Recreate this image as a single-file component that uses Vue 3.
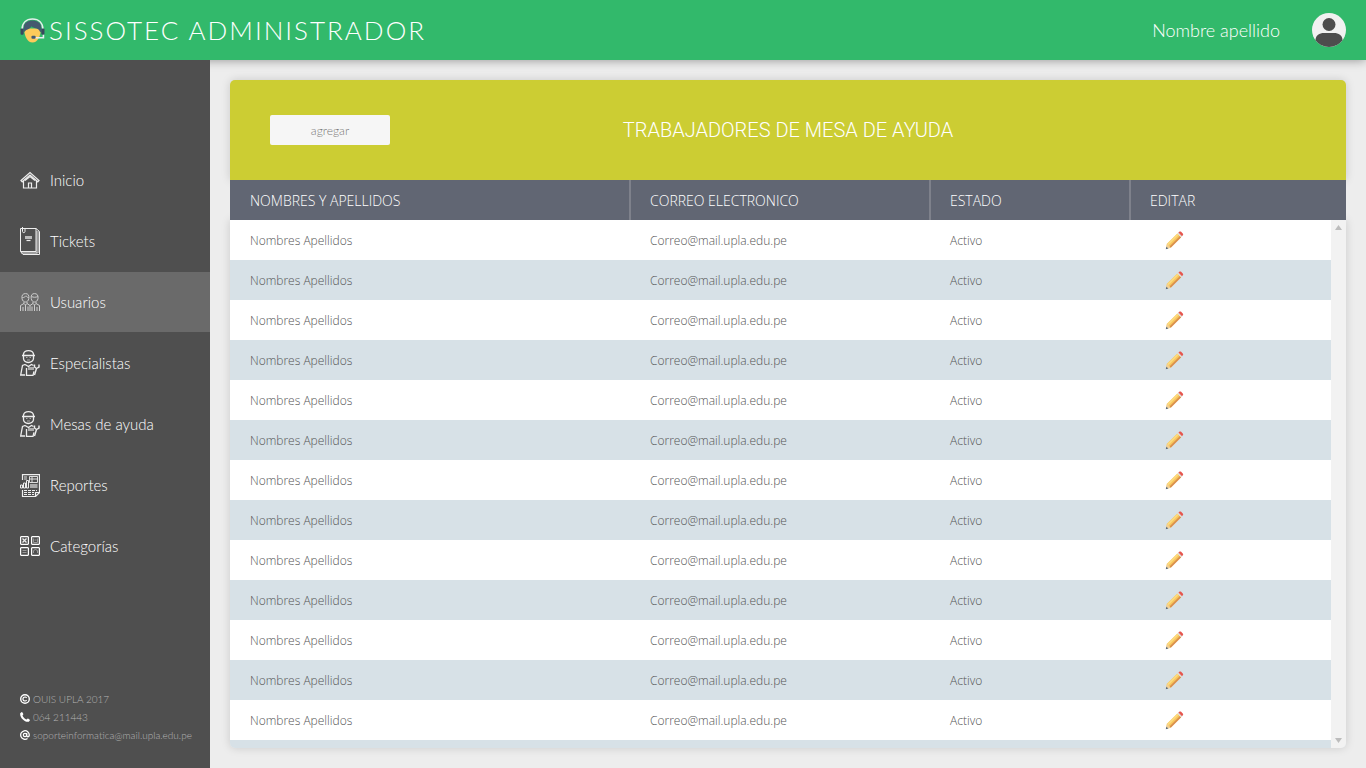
<script setup>
const menu = [
  { id: 'inicio', label: 'Inicio' },
  { id: 'tickets', label: 'Tickets' },
  { id: 'usuarios', label: 'Usuarios', active: true },
  { id: 'especialistas', label: 'Especialistas' },
  { id: 'mesas', label: 'Mesas de ayuda' },
  { id: 'reportes', label: 'Reportes' },
  { id: 'categorias', label: 'Categorías' }
]

const workers = Array.from({ length: 14 }, (_, i) => ({
  id: i + 1,
  name: 'Nombres Apellidos',
  email: 'Correo@mail.upla.edu.pe',
  status: 'Activo'
}))
</script>

<template>
  <div class="app">
    <header class="topbar">
      <h1 class="brand">
        <svg class="brand-icon" viewBox="0 0 24 24" aria-hidden="true">
          <path d="M4 10h16c0 7-3 13.500-8 13.500S4 17 4 10z" fill="#fdcb5b" />
          <path d="M3.500 14V9C4 4.500 7.500 2.500 12 2.500S20 4.500 20.500 9v5l-1.500-1c-.5-2-2-3-5-3.500-1.500-.3-2.500-.8-3-1.500-1 2.500-3.500 3-5 3.500z" fill="#445a6f" />
          <path d="M2 11C2 4.500 6 1 12 1s10 3.500 10 10" fill="none" stroke="#e4efec" stroke-width="1.500" />
          <rect x="0.500" y="10" width="3" height="6" rx="1" fill="#39485e" />
          <rect x="20.500" y="10" width="3" height="6" rx="1" fill="#39485e" />
          <path d="M22.500 16v3H14" fill="none" stroke="#e8edf0" stroke-width="1.500" />
          <rect x="11" y="17" width="4" height="3" rx="1" fill="#445a6f" />
        </svg>
        <span>SISSOTEC ADMINISTRADOR</span>
      </h1>
      <div class="user">
        <span>Nombre apellido</span>
        <svg class="avatar" viewBox="0 0 34 34" aria-hidden="true">
          <circle cx="17" cy="17" r="17" fill="#f1f1f1" />
          <circle cx="17" cy="11.500" r="6.500" fill="#4d4d4d" />
          <path d="M3.500 27.300C3.500 22 7.500 20 12 20h10c4.500 0 8.500 2 8.500 7.300A17 17 0 0 1 17 34 17 17 0 0 1 3.500 27.300z" fill="#4d4d4d" />
        </svg>
      </div>
    </header>

    <div class="body">
      <aside class="sidebar">
        <nav class="menu">
          <a v-for="item in menu" :key="item.id" href="#" class="menu-item" :class="{ active: item.active }">
            <svg v-if="item.id === 'inicio'" class="icon" viewBox="0 0 20 18" aria-hidden="true">
              <path d="M1 9.500 10 1.500l9 8-1.200 1.300L10 4l-7.800 6.800z" stroke-width="1.200" />
              <path d="M3.500 10v7h13v-7M8.500 17v-5h3v5M5 9.500l5-4 5 4" stroke-width="1.200" />
            </svg>
            <svg v-else-if="item.id === 'tickets'" class="icon" viewBox="0 0 20 28" aria-hidden="true">
              <path d="M17.500 4v22" stroke="#999" stroke-width="3" />
              <path d="M.5 1.500h15.500v23H.5zM.5 24.500l2.500 3h16.500V4.500L16 1.500M1.500 26h16" />
              <path d="M2.500 0v4.500c0 1.500 2.500 1.500 2.500 0V1.500" />
              <path d="M5 10.500h7" stroke="#bbb" stroke-width="3" />
              <path d="M6.500 13.500h4" stroke-width="1.200" />
            </svg>
            <svg v-else-if="item.id === 'usuarios'" class="icon soft" viewBox="0 0 20 18" aria-hidden="true">
              <path d="M2 5.500C1.500 2 3 .6 5.500.6S9.300 2 8.800 5.500C8.500 7.800 7 9 5.500 9S2.300 7.800 2 5.500zM11.200 5.500C10.700 2 12.200.6 14.500.6s4 1.400 3.500 4.900C17.700 7.800 16 9 14.500 9s-3-1.200-3.300-3.500z" />
              <path d="M2.200 4.800C4 4.500 5 4 6 2.800c.8 1.200 1.700 1.700 2.800 2M11.400 3.500c2 1 4.500 1 6.400 0" />
              <path d="M4 9v1.500L5.500 12 7 10.500V9M13 9v1.500l1.500 1.500 1.500-1.500V9M.5 18v-5.500L4 10.500M7 10.500l3 2 3-2M16 10.500l3.500 2V18M3 18v-4M5.500 18v-6M8 18v-4.500M10 18v-5.500M12 18v-4.500M14.500 18v-6M17 18v-4" />
            </svg>
            <svg v-else-if="item.id === 'especialistas' || item.id === 'mesas'" class="icon" viewBox="0 0 20 26" aria-hidden="true">
              <path d="M3.500 5.500V4C4 1.500 6 .7 8.500.7S13 1.500 13.500 4v1.500M2 5.500h13" stroke-width="1.300" />
              <path d="M3.500 6v2.500c0 2 2 4 4.800 4s5.200-2 5.200-4V6" stroke-width="1.300" />
              <path d="M6 7.500h1.500M9.500 7.500H11M7 10h3" stroke="#aaa" />
              <path d="M5 14.500l-2.500 1L.7 25H5M5 14.500l3.500 2 3-2 2 1M6.500 18v7.300H13l1-4" stroke-width="1.300" />
              <path d="M8 18.500h6" stroke="#aaa" stroke-width="3" />
              <path d="M14.500 14.500v2.500l2 1.500 2.500-1.500v-2.500M16.500 18.500 14.500 25" stroke-width="1.400" />
            </svg>
            <svg v-else-if="item.id === 'reportes'" class="icon" viewBox="0 0 20 23" aria-hidden="true">
              <path d="M2.500 6V.6h17v18l-4 3.900h-13V16M15.500 22.500v-4h4" stroke-width="1.200" />
              <path d="M.5 14v-3h2v3zM3.500 14V9h2v5zM6.500 14V6.500h2V14z" />
              <path d="M4 3h3M4 5h3M9.500 2.500h8v6h-8zM9.500 5h8M12 2.500v6" stroke-width=".9" />
              <path d="M10 12h7.500" stroke="#aaa" stroke-width="4" />
              <path d="M4 16.500h13M4 18.500h10M4 20.500h10" stroke-dasharray="3 1" />
            </svg>
            <svg v-else class="icon" viewBox="0 0 20 20" aria-hidden="true">
              <path d="M1.200.6h6.600l.6.600v6.600l-.6.600H1.200l-.6-.6V1.200zM12.200.6h6.600l.6.600v6.600l-.6.600h-6.600l-.6-.6V1.200zM1.200 11.600h6.600l.6.600v6.600l-.6.600H1.200l-.6-.6v-6.600zM12.200 11.600h6.600l.6.600v6.600l-.6.600h-6.600l-.6-.6v-6.600z" stroke="#fff" stroke-width="1.200" />
              <path d="m2.500 2.500 4 4M6.500 2.500l-4 4" stroke-width="1.300" />
              <path d="M13.500 2.500v4h4v-4M14.500 4h2M2.500 14.500h4M2.500 16.500h4M13.500 17v-2.500l2-1 2 1V17" stroke="#999" />
            </svg>
            <span>{{ item.label }}</span>
          </a>
        </nav>

        <footer class="contact">
          <div class="contact-line">
            <svg class="contact-icon" viewBox="0 0 10 10" aria-hidden="true">
              <circle cx="5" cy="5" r="4.300" fill="none" stroke="#fff" stroke-width="1.400" />
              <path d="M6.600 3.900a2 2 0 1 0 0 2.200" fill="none" stroke="#fff" stroke-width="1.200" />
            </svg>
            <span>OUIS UPLA 2017</span>
          </div>
          <div class="contact-line">
            <svg class="contact-icon" viewBox="0 0 10 10" aria-hidden="true">
              <path d="M.2 1.200 1.700 0c.7.200 1.300 1.200 1.700 2.300L2.500 3.400C3 5 5 7 6.600 7.500l1.100-.9C8.800 7 9.800 7.600 10 8.300L8.800 9.800C4.500 10.500-.5 5.500.2 1.200z" fill="#fff" />
            </svg>
            <span>064 211443</span>
          </div>
          <div class="contact-line">
            <svg class="contact-icon" viewBox="0 0 10 10" aria-hidden="true">
              <circle cx="5" cy="5" r="1.700" fill="none" stroke="#fff" stroke-width="1.200" />
              <path d="M6.700 3v2.800c0 1.400 2.600 1.400 2.600-.8A4.300 4.300 0 1 0 7.500 8.500" fill="none" stroke="#fff" stroke-width="1.300" />
            </svg>
            <span>soporteinformatica@mail.upla.edu.pe</span>
          </div>
        </footer>
      </aside>

      <main class="content">
        <section class="panel">
          <div class="banner">
            <button type="button" class="add">agregar</button>
            <h2 class="title">TRABAJADORES DE MESA DE AYUDA</h2>
          </div>

          <div class="list">
            <div class="scroller">
              <table class="table">
                <thead>
                  <tr>
                    <th scope="col" class="col-name">NOMBRES Y APELLIDOS</th>
                    <th scope="col" class="col-mail">CORREO ELECTRONICO</th>
                    <th scope="col" class="col-status">ESTADO</th>
                    <th scope="col">EDITAR</th>
                  </tr>
                </thead>
                <tbody>
                  <tr v-for="worker in workers" :key="worker.id">
                    <td>{{ worker.name }}</td>
                    <td>{{ worker.email }}</td>
                    <td>{{ worker.status }}</td>
                    <td>
                      <button type="button" class="edit" aria-label="Editar">
                        <svg viewBox="0 0 20 20" aria-hidden="true">
                          <path d="M2 13.500 13 2.500l4 4L6 17.500 1 19z" fill="#f8c75c" />
                          <path d="M4.700 16.200 15.700 5.200 17 6.500 6 17.500z" fill="#d98f50" />
                          <path d="M2.300 13.800 13.300 2.800l1.200 1.200L3.500 15z" fill="#fcdb80" />
                          <path d="M2 13.500 6 17.500 1 19z" fill="#f2d097" />
                          <path d="M1.500 16.500 3.500 18.500.8 19.200z" fill="#556a85" />
                          <path d="m13 2.500 1.500-1.500L18.500 5 17 6.500z" fill="#dfdcd8" />
                          <path d="m14.200 1.700.8-.8c.6-.6 1.300-.6 2 0l1.700 1.700c.6.700.6 1.400 0 2l-.8.800z" fill="#e6564e" />
                        </svg>
                      </button>
                    </td>
                  </tr>
                </tbody>
              </table>
            </div>
            <div class="rail" aria-hidden="true">
              <svg viewBox="0 0 7 5"><path d="M3.500 0 7 5H0z" /></svg>
              <svg viewBox="0 0 7 5"><path d="M3.500 5 7 0H0z" /></svg>
            </div>
          </div>
        </section>
      </main>
    </div>
  </div>
</template>

<style>
body {
  margin: 0;
  background: #ededed;
}
</style>

<style scoped>
.app {
  display: flex;
  flex-direction: column;
  height: 100vh;
  overflow: hidden;
  font-family: Lato, "Open Sans", sans-serif;
  font-weight: 300;
  background: #ededed;
}

.app * {
  box-sizing: border-box;
}

.topbar {
  display: flex;
  flex: none;
  align-items: center;
  justify-content: space-between;
  height: 60px;
  padding: 0 20px;
  color: #fff;
  background: #32b96b;
  box-shadow: 0 0 10px rgba(0, 0, 0, 0.4);
}

.brand {
  display: flex;
  align-items: center;
  gap: 4px;
  margin: 0;
  font-size: 26px;
  font-weight: 300;
  line-height: 32px;
  letter-spacing: 2px;
}

.brand-icon {
  width: 25px;
  height: 25px;
}

.user {
  display: flex;
  align-items: center;
  gap: 32px;
  font-size: 18px;
}

.avatar {
  width: 34px;
  height: 34px;
}

.body {
  display: flex;
  flex: 1;
  min-height: 0;
}

.sidebar {
  position: relative;
  display: flex;
  flex: none;
  flex-direction: column;
  justify-content: space-between;
  width: 210px;
  padding: 90px 0 24px;
  background: #4f4f4f;
}

.menu {
  display: flex;
  flex-direction: column;
  gap: 1px;
}

.menu-item {
  display: flex;
  align-items: center;
  gap: 10px;
  height: 60px;
  padding: 0 20px;
  font-size: 15px;
  color: #fff;
  text-decoration: none;
}

.menu-item.active {
  background: #6a6a6a;
}

.icon {
  flex: none;
  width: 20px;
  fill: none;
  stroke: #eee;
}

.icon.soft {
  stroke: #ccc;
}

.contact {
  padding: 0 20px;
  font-size: 10px;
  line-height: 18px;
  color: #b4b4b4;
}

.contact-line {
  display: flex;
  align-items: center;
  gap: 3px;
}

.contact-icon {
  flex: none;
  width: 10px;
  height: 10px;
}

.content {
  flex: 1;
  min-width: 0;
  padding: 20px;
}

.panel {
  display: flex;
  flex-direction: column;
  height: 100%;
}

.banner {
  display: grid;
  flex: none;
  grid-template-columns: 1fr auto 1fr;
  align-items: center;
  height: 100px;
  padding: 0 40px;
  background: #cccd33;
  border-radius: 5px 5px 0 0;
  box-shadow: 0 0 10px rgba(0, 0, 0, 0.15);
}

.add {
  width: 120px;
  height: 30px;
  font-family: inherit;
  font-size: 12px;
  font-weight: 300;
  color: #777;
  background: #f6f6f6;
  border: 0;
  border-radius: 2px;
}

.title {
  margin: 0;
  font-family: Roboto, sans-serif;
  font-size: 20px;
  font-weight: 300;
  color: #fff;
}

.list {
  position: relative;
  z-index: 0;
  flex: 1;
  min-height: 0;
}

.list::before {
  position: absolute;
  inset: 40px 0 0;
  z-index: -1;
  content: "";
  border-radius: 0 0 5px 5px;
  box-shadow: 0 0 10px rgba(0, 0, 0, 0.15);
}

.scroller {
  height: 100%;
  overflow: auto;
  scrollbar-width: none;
  border-radius: 0 0 5px 5px;
}

.table {
  width: 100%;
  table-layout: fixed;
  border-spacing: 0;
  font-family: "Open Sans", sans-serif;
}

.col-name {
  width: 400px;
}

.col-mail {
  width: 300px;
}

.col-status {
  width: 200px;
}

th,
td {
  height: 40px;
  padding: 0 20px;
  text-align: left;
}

th {
  position: sticky;
  top: 0;
  z-index: 1;
  font-size: 14px;
  font-weight: 300;
  color: #fff;
  background: #616673;
}

th + th::before {
  position: absolute;
  top: 0;
  bottom: 0;
  left: -1px;
  width: 2px;
  content: "";
  background: #7e818b;
}

td {
  font-size: 12px;
  font-weight: 300;
  color: #555;
  background: #fff;
}

tr:nth-child(even) td {
  background: #d7e1e7;
}

.edit {
  display: flex;
  align-items: center;
  justify-content: center;
  width: 48px;
  height: 24px;
  padding: 0;
  background: none;
  border: 0;
}

.edit svg {
  width: 19px;
  height: 19px;
}

.rail {
  position: absolute;
  top: 40px;
  right: 0;
  bottom: 0;
  display: flex;
  flex-direction: column;
  align-items: center;
  justify-content: space-between;
  width: 15px;
  padding: 5px 0;
  background: #f2f2f2;
  border-radius: 0 0 5px;
}

.rail svg {
  width: 7px;
  height: 5px;
  fill: #bcbcbc;
}
</style>
